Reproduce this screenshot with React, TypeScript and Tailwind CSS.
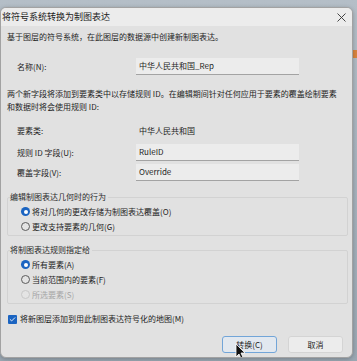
import { Check } from 'lucide-react'

const font = { fontFamily: '"Noto Sans CJK SC", "Noto Sans", sans-serif' }

function Radio({ checked, disabled, label }: { checked?: boolean; disabled?: boolean; label: string }) {
  return (
    <div className={`flex h-[15px] items-center gap-[2px] ${disabled ? 'text-[#a6a6a6]' : 'text-[#1e1e1e]'}`}>
      {checked ? (
        <span className="flex h-[9px] w-[9px] items-center justify-center rounded-full bg-[#1b64c1]">
          <span className="h-[4px] w-[4px] rounded-full bg-white" />
        </span>
      ) : (
        <span
          className={`h-[9px] w-[9px] rounded-full border ${disabled ? 'border-[#c8c8c8]' : 'border-[#5c5c5c]'} bg-[#e4e4e4]`}
        />
      )}
      <span>{label}</span>
    </div>
  )
}

function Field({ value }: { value: string }) {
  return (
    <div className="flex h-[17px] w-[163px] items-center border-b border-[#a3a3a3] bg-[#ececec] pl-[3px] text-[#1e1e1e]">
      {value}
    </div>
  )
}

function Group({ title, children }: { title: string; children: React.ReactNode }) {
  return (
    <div className="relative ml-[6px] mr-[4px] rounded-[2px] border border-[#d2d2d2] pb-[1px] pl-[13px] pt-[6px]">
      <span className="absolute -top-[7px] left-[2px] bg-[#e1e1e1] pr-[2px] leading-[12px] text-[#2a2a2a]">{title}</span>
      <div className="flex flex-col">{children}</div>
    </div>
  )
}

function Label({ children }: { children: React.ReactNode }) {
  return <span className="w-[135px] shrink-0 pl-[16px] text-[#1e1e1e]">{children}</span>
}

export default function App() {
  return (
    <div
      className="relative h-[361px] w-[357px] overflow-hidden bg-gradient-to-b from-[#b4bec7] to-[#9aa7b2] text-[8px] leading-[12px]"
      style={font}
    >
      <div className="absolute right-0 top-[50px] h-[8px] w-[4px] bg-[#d9843f]" />
      <div className="absolute left-0 top-[7px] flex h-[351px] w-[353px] flex-col overflow-hidden rounded-[6px] border border-[#a2a2a2] bg-[#e1e1e1] shadow-[0_1px_4px_rgba(0,0,0,0.25)]">
        <header className="flex h-[18px] shrink-0 items-center justify-between bg-[#ececec] pl-[1px] pr-[6px]">
          <span className="text-[9px] text-[#1b1b1b]">将符号系统转换为制图表达</span>
          <svg width="9" height="9" viewBox="0 0 9 9" className="text-[#333]">
            <path d="M0.5 0.5 L8.5 8.5 M8.5 0.5 L0.5 8.5" stroke="currentColor" strokeWidth="0.9" />
          </svg>
        </header>

        <div className="flex flex-col">
          <p className="ml-[6px] mt-[5px] text-[#1e1e1e]">基于图层的符号系统，在此图层的数据源中创建新制图表达。</p>

          <div className="mt-[15px] flex items-center">
            <Label>名称(N):</Label>
            <Field value="中华人民共和国_Rep" />
          </div>

          <p className="ml-[6px] mt-[12px] whitespace-nowrap leading-[13px] text-[#1e1e1e]">
            两个新字段将添加到要素类中以存储规则 ID。在编辑期间针对任何应用于要素的覆盖绘制要素
            <br />
            和数据时将会使用规则 ID:
          </p>

          <div className="mt-[12px] flex items-center">
            <Label>要素类:</Label>
            <span className="pl-[3px] text-[#1e1e1e]">中华人民共和国</span>
          </div>

          <div className="mt-[7px] flex flex-col gap-[3px]">
            <div className="flex items-center">
              <Label>规则 ID 字段(U):</Label>
              <Field value="RuleID" />
            </div>
            <div className="flex items-center">
              <Label>覆盖字段(V):</Label>
              <Field value="Override" />
            </div>
          </div>

          <div className="mt-[16px]">
            <Group title="编辑制图表达几何时的行为">
              <Radio checked label="将对几何的更改存储为制图表达覆盖(O)" />
              <Radio label="更改支持要素的几何(G)" />
            </Group>
          </div>

          <div className="mt-[14px]">
            <Group title="将制图表达规则指定给">
              <Radio checked label="所有要素(A)" />
              <Radio label="当前范围内的要素(F)" />
              <Radio disabled label="所选要素(S)" />
            </Group>
          </div>

          <div className="ml-[7px] mt-[9px] flex items-center gap-[3px] text-[#1e1e1e]">
            <span className="flex h-[9px] w-[9px] items-center justify-center rounded-[1px] bg-[#1b64c1]">
              <Check size={7} strokeWidth={3} className="text-white" />
            </span>
            <span>将新图层添加到用此制图表达符号化的地图(M)</span>
          </div>

          <div className="mr-[9px] mt-[11px] flex justify-end gap-[11px]">
            <button className="relative flex h-[17px] w-[55px] items-center justify-center rounded-[3px] border border-[#72a5d8] bg-[#e2e8ef] text-[#1e1e1e]">
              转换(C)
              <svg width="11" height="18" viewBox="0 0 11 18" className="absolute left-[12px] top-[6px]">
                <path d="M1 1 L1 14 L4 11 L6.5 16.5 L8.5 15.5 L6 10 L10 10 Z" fill="#111" stroke="#fff" strokeWidth="0.8" />
              </svg>
            </button>
            <button className="flex h-[17px] w-[55px] items-center justify-center rounded-[3px] border border-[#d4d4d4] bg-[#ececec] text-[#1e1e1e]">
              取消
            </button>
          </div>
        </div>
      </div>
    </div>
  )
}
